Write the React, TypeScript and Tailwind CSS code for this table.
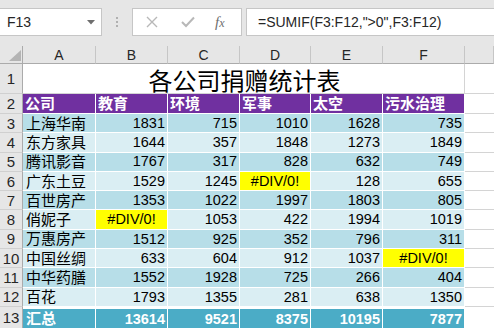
import React from "react";

const font = { fontFamily: '"Liberation Sans", "Noto Sans CJK SC", sans-serif' };

type Row = [string, (number | string)[]];

const rows: Row[] = [
  ["上海华南", [1831, 715, 1010, 1628, 735]],
  ["东方家具", [1644, 357, 1848, 1273, 1849]],
  ["腾讯影音", [1767, 317, 828, 632, 749]],
  ["广东土豆", [1529, 1245, "#DIV/0!", 128, 655]],
  ["百世房产", [1353, 1022, 1997, 1803, 805]],
  ["俏妮子", ["#DIV/0!", 1053, 422, 1994, 1019]],
  ["万惠房产", [1512, 925, 352, 796, 311]],
  ["中国丝绸", [633, 604, 912, 1037, "#DIV/0!"]],
  ["中华药膳", [1552, 1928, 725, 266, 404]],
  ["百花", [1793, 1355, 281, 638, 1350]],
];

const totals = [13614, 9521, 8375, 10195, 7877];
const headers = ["公司", "教育", "环境", "军事", "太空", "污水治理"];

function RowHead({ n }: { n: number }) {
  return (
    <div className="flex items-center justify-center bg-[#e6e6e6] border-r border-b border-r-[#ababab] border-b-[#d0d0d0] text-[15px] text-[#262626] leading-none">
      {n}
    </div>
  );
}

function GCell() {
  return <div className="border-b border-[#d4d4d4]" />;
}

export default function App() {
  return (
    <div className="w-[494px] h-[328px] overflow-hidden bg-white relative" style={font}>
      {/* formula bar */}
      <div className="h-[46px] bg-[#e6e6e6] flex items-start pt-[8px]">
        <div className="w-[102px] h-[28px] bg-white border border-l-0 border-[#c6c6c6] flex items-center justify-between pl-[7px] pr-[6px]">
          <span className="text-[14px] text-[#262626]">F13</span>
          <svg width="8" height="5" viewBox="0 0 8 5">
            <path d="M0 0 L8 0 L4 4.5 Z" fill="#6e6e6e" />
          </svg>
        </div>
        <div className="w-[30px] h-[28px] flex flex-col items-center justify-center gap-[2px]">
          <div className="w-[2px] h-[2px] bg-[#b0b0b0]" />
          <div className="w-[2px] h-[2px] bg-[#b0b0b0]" />
          <div className="w-[2px] h-[2px] bg-[#b0b0b0]" />
        </div>
        <div className="w-[110px] h-[28px] bg-white border border-[#c6c6c6] flex items-center">
          <svg width="12" height="12" viewBox="0 0 12 12" className="ml-[13px]">
            <path d="M1 1 L11 11 M11 1 L1 11" stroke="#b8b8b8" strokeWidth="1.4" />
          </svg>
          <svg width="14" height="12" viewBox="0 0 14 12" className="ml-[23px]">
            <path d="M1 6 L5 10 L13 1.5" stroke="#b8b8b8" strokeWidth="2" fill="none" />
          </svg>
          <span
            className="ml-[20px] text-[15px] italic text-[#6e6e6e] leading-none"
            style={{ fontFamily: '"Liberation Serif", serif' }}
          >
            f<span className="text-[12px]">x</span>
          </span>
        </div>
        <div className="ml-[4px] flex-1 h-[28px] bg-white border border-r-0 border-[#c6c6c6] flex items-center pl-[11px]">
          <span className="text-[14px] text-[#262626]">=SUMIF(F3:F12,"&gt;0",F3:F12)</span>
        </div>
      </div>

      {/* sheet grid */}
      <div className="grid grid-cols-[23px_73px_72px_72px_71px_72px_82px_1fr] grid-rows-[18px_30px_20px_repeat(10,19.3px)_22px]">
        {/* column headers */}
        <div className="bg-[#e6e6e6] border-r border-b border-r-[#ababab] border-b-[#ababab] relative">
          <svg width="12" height="11" viewBox="0 0 12 11" className="absolute left-[9px] top-[4px]">
            <path d="M12 0 L12 11 L0 11 Z" fill="#b4b4b4" />
          </svg>
        </div>
        {["A", "B", "C", "D", "E", "F", "G"].map((c) => (
          <div
            key={c}
            className="bg-[#e6e6e6] border-r border-b border-r-[#c6c6c6] border-b-[#ababab] flex items-center justify-center text-[14px] text-[#262626] leading-none"
          >
            {c === "G" ? "" : c}
          </div>
        ))}

        {/* row 1 */}
        <RowHead n={1} />
        <div className="col-span-6 border-r border-b border-[#d4d4d4] flex items-center justify-center">
          <span className="text-[24px] leading-[24px] text-black pl-[2px] mt-[2px]" style={{ fontFamily: '"Noto Sans CJK SC", sans-serif' }}>
            各公司捐赠统计表
          </span>
        </div>
        <GCell />

        {/* row 2 */}
        <RowHead n={2} />
        {headers.map((h) => (
          <div
            key={h}
            className="bg-[#7030a0] border-r border-b border-white flex items-center pl-[2px] text-[15px] font-bold text-white leading-none"
          >
            {h}
          </div>
        ))}
        <GCell />

        {/* data rows */}
        {rows.map(([name, vals], i) => {
          const bg = i % 2 === 0 ? "bg-[#b7dee8]" : "bg-[#daeef3]";
          return (
            <React.Fragment key={name}>
              <RowHead n={i + 3} />
              <div className={`${bg} border-r border-b border-white flex items-center pl-[3px] text-[15px] text-black leading-none`}>
                {name}
              </div>
              {vals.map((v, j) =>
                typeof v === "string" ? (
                  <div
                    key={j}
                    className="bg-[#ffff00] border-r border-b border-white flex items-center justify-center text-[14.5px] text-black leading-none"
                  >
                    {v}
                  </div>
                ) : (
                  <div
                    key={j}
                    className={`${bg} border-r border-b border-white flex items-center justify-end pr-[2px] text-[14.5px] text-black leading-none`}
                  >
                    {v}
                  </div>
                )
              )}
              <GCell />
            </React.Fragment>
          );
        })}

        {/* total row */}
        <RowHead n={13} />
        <div className="bg-[#4bacc6] border-t-2 border-r border-white flex items-center pl-[3px] text-[15px] font-bold text-white leading-none">
          汇总
        </div>
        {totals.map((t, j) => (
          <div
            key={j}
            className="bg-[#4bacc6] border-t-2 border-r border-white flex items-center justify-end pr-[2px] text-[14.5px] font-bold text-white leading-none"
          >
            {t}
          </div>
        ))}
        <div />
      </div>
    </div>
  );
}
